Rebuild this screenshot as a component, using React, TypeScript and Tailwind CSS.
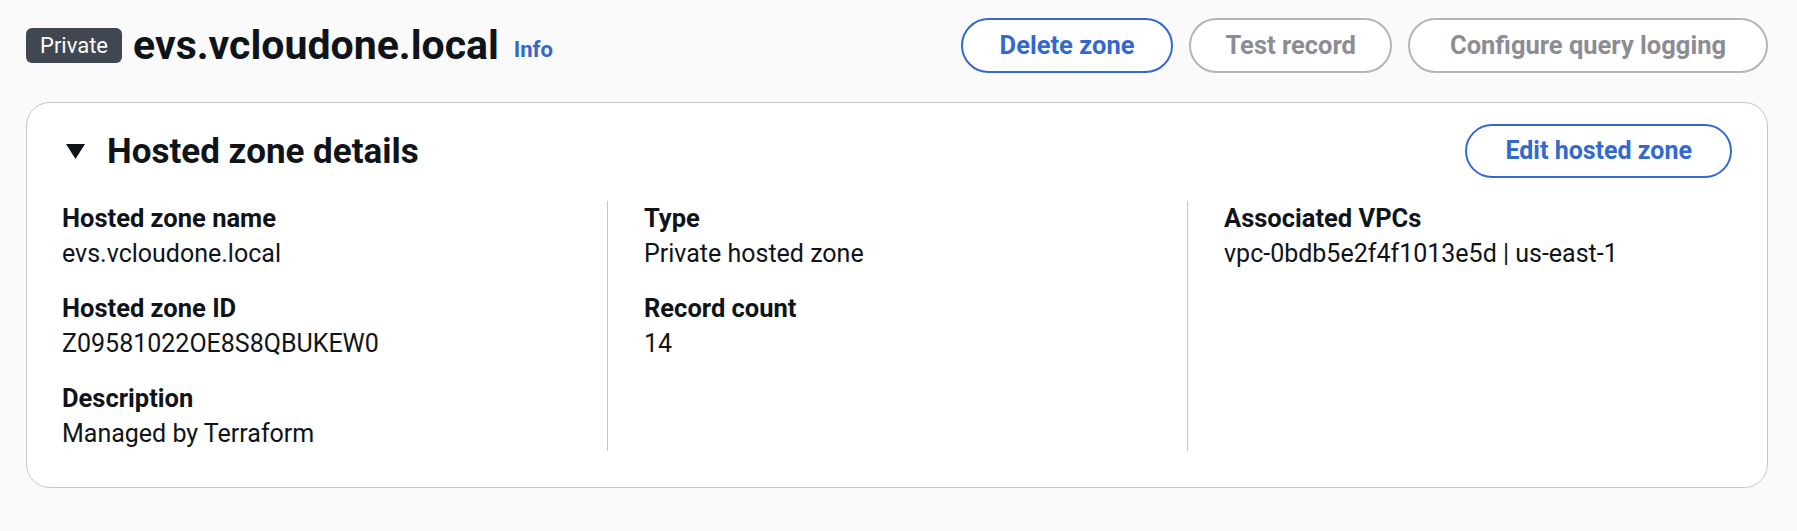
const FONT = "font-['Roboto','Liberation_Sans',sans-serif]";

type Item = { label: string; value: string };

const COLUMNS: Item[][] = [
  [
    { label: "Hosted zone name", value: "evs.vcloudone.local" },
    { label: "Hosted zone ID", value: "Z09581022OE8S8QBUKEW0" },
    { label: "Description", value: "Managed by Terraform" },
  ],
  [
    { label: "Type", value: "Private hosted zone" },
    { label: "Record count", value: "14" },
  ],
  [{ label: "Associated VPCs", value: "vpc-0bdb5e2f4f1013e5d | us-east-1" }],
];

function OutlineButton({ children, disabled, pad }: { children: string; disabled?: boolean; pad: string }) {
  return (
    <button
      className={`h-[55px] rounded-full border-2 bg-white text-[25.5px] font-bold ${pad} ${
        disabled ? "border-[#b4b4bb] text-[#8c8c94]" : "border-[#3268cf] text-[#3268cf]"
      }`}
    >
      {children}
    </button>
  );
}

export default function App() {
  return (
    <div className={`min-h-[531px] bg-[#fafafa] pl-[26px] pr-[29px] pt-[18px] text-[#0f141a] ${FONT}`}>
      <div className="flex items-center justify-between">
        <div className="flex items-center">
          <span className="flex h-[35px] items-center rounded-[6px] bg-[#414750] px-[14px] text-[22px] text-[#fbfbfb]">
            Private
          </span>
          <h1 className="ml-[11px] text-[41px] font-bold leading-[55px]">evs.vcloudone.local</h1>
          <a className="ml-[15px] mt-[8px] text-[22px] font-bold text-[#3268cf]">Info</a>
        </div>
        <div className="flex items-center gap-[16px]">
          <OutlineButton pad="px-[37px]">Delete zone</OutlineButton>
          <OutlineButton disabled pad="px-[34px]">
            Test record
          </OutlineButton>
          <OutlineButton disabled pad="px-[40px]">
            Configure query logging
          </OutlineButton>
        </div>
      </div>

      <div className="mt-[29px] rounded-[24px] border border-[#c6c6cd] bg-white pb-[36px]">
        <div className="flex items-center justify-between pl-[39px] pr-[35px] pt-[21px]">
          <div className="flex items-center gap-[22px]">
            <svg width="19" height="15" viewBox="0 0 19 15">
              <polygon points="0,0 19,0 9.5,15" fill="#0f141a" />
            </svg>
            <h2 className="text-[35px] font-bold leading-[45px]">Hosted zone details</h2>
          </div>
          <button className="h-[54px] rounded-full border-2 border-[#3268cf] bg-white px-[38px] text-[25px] font-bold text-[#3268cf]">
            Edit hosted zone
          </button>
        </div>

        <div className="mt-[23px] grid grid-cols-3">
          {COLUMNS.map((col, i) => (
            <div
              key={i}
              className={
                i === 0
                  ? "flex flex-col gap-[20px] pl-[35px] pr-[20px]"
                  : "flex flex-col gap-[20px] border-l border-[#c6c6cd] pl-[36px] pr-[20px]"
              }
            >
              {col.map((item) => (
                <div key={item.label}>
                  <div className="text-[25.5px] font-bold leading-[35px]">{item.label}</div>
                  <div className="text-[25px] leading-[35px]">{item.value}</div>
                </div>
              ))}
            </div>
          ))}
        </div>
      </div>
    </div>
  );
}
